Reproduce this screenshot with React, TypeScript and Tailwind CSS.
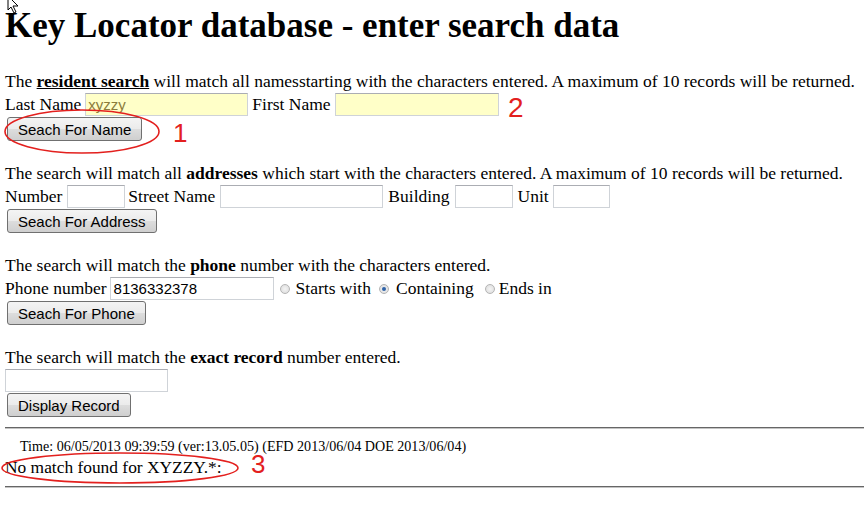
import React from 'react';

const Field = ({ w, value, yellow, className = '' }: { w: string; value?: string; yellow?: boolean; className?: string }) => (
  <div
    className={`h-[23px] border border-[#cfd3d8] border-t-[#abadb3] flex items-center pl-[2px] font-['Liberation_Sans',Arial,sans-serif] text-[15px] leading-none ${
      yellow ? 'bg-[#ffffc8] text-[#8c7d3b]' : 'bg-white text-black'
    } ${w} ${className}`}
  >
    {value}
  </div>
);

const Btn = ({ children }: { children: React.ReactNode }) => (
  <div className="flex">
    <button className="ml-[2px] h-[24px] px-[10px] rounded-[3px] border border-[#707070] bg-[linear-gradient(to_bottom,#f4f4f4_0%,#ebebeb_50%,#dddddd_50%,#cfcfcf_100%)] font-['Liberation_Sans',Arial,sans-serif] text-[15px] leading-none text-black whitespace-nowrap">
      {children}
    </button>
  </div>
);

const Radio = ({ checked }: { checked?: boolean }) => (
  <span className="w-[10px] h-[10px] rounded-full border border-[#b4b4b4] bg-[radial-gradient(circle,#f4f4f4_0%,#dadada_100%)] flex items-center justify-center">
    {checked && <span className="w-[4px] h-[4px] rounded-full bg-[#2f63a8]" />}
  </span>
);

export default function App() {
  return (
    <div className="relative min-h-screen overflow-hidden bg-white text-black font-['Liberation_Serif','Times_New_Roman',serif] text-[17.5px]">
      <div className="pl-[5px] pt-[7px]">
        <h1 className="text-[35px] leading-[37px] font-bold whitespace-nowrap">Key Locator database - enter search data</h1>

        <section className="mt-[29px]">
          <p className="h-[19px] leading-[17px] whitespace-nowrap">
            The <b className="underline">resident search</b> will match all namesstarting with the characters entered. A maximum of 10 records will be returned.
          </p>
          <div className="flex items-center h-[25px] whitespace-nowrap">
            <span>Last Name</span>
            <Field w="w-[163px]" yellow value="xyzzy" className="ml-[4px]" />
            <span className="ml-[4px]">First Name</span>
            <Field w="w-[164px]" yellow className="ml-[4px]" />
          </div>
          <Btn>Seach For Name</Btn>
        </section>

        <section className="mt-[24px]">
          <p className="h-[19px] leading-[17px] whitespace-nowrap">
            The search will match all <b>addresses</b> which start with the characters entered. A maximum of 10 records will be returned.
          </p>
          <div className="flex items-center h-[25px] whitespace-nowrap">
            <span>Number</span>
            <Field w="w-[58px]" className="ml-[5px]" />
            <span className="ml-[3px]">Street Name</span>
            <Field w="w-[163px]" className="ml-[5px]" />
            <span className="ml-[5px]">Building</span>
            <Field w="w-[58px]" className="ml-[5px]" />
            <span className="ml-[5px]">Unit</span>
            <Field w="w-[57px]" className="ml-[4px]" />
          </div>
          <Btn>Seach For Address</Btn>
        </section>

        <section className="mt-[24px]">
          <p className="h-[19px] leading-[17px] whitespace-nowrap">
            The search will match the <b>phone</b> number with the characters entered.
          </p>
          <div className="flex items-center h-[25px] whitespace-nowrap">
            <span>Phone number</span>
            <Field w="w-[164px]" value="8136332378" className="ml-[3px] pl-[3px]" />
            <span className="ml-[6px]"><Radio /></span>
            <span className="ml-[6px]">Starts with</span>
            <span className="ml-[8px]"><Radio checked /></span>
            <span className="ml-[7px]">Containing</span>
            <span className="ml-[11px]"><Radio /></span>
            <span className="ml-[4px]">Ends in</span>
          </div>
          <Btn>Seach For Phone</Btn>
        </section>

        <section className="mt-[24px]">
          <p className="h-[19px] leading-[17px] whitespace-nowrap">
            The search will match the <b>exact record</b> number entered.
          </p>
          <div className="flex items-center h-[25px]">
            <Field w="w-[163px]" />
          </div>
          <Btn>Display Record</Btn>
        </section>

        <hr className="mt-[10px] border-0 border-t border-b border-t-[#666666] border-b-[#c4c4c4]" />
        <div className="mt-[9px] pl-[15px] text-[14.1px] leading-[16px] whitespace-nowrap">
          Time: 06/05/2013 09:39:59 (ver:13.05.05) (EFD 2013/06/04 DOE 2013/06/04)
        </div>
        <div className="mt-[3px] text-[17.4px] leading-[20px] whitespace-nowrap">No match found for XYZZY.*:</div>
        <hr className="mt-[9px] border-0 border-t border-b border-t-[#666666] border-b-[#c4c4c4]" />
      </div>

      {/* red annotations drawn over the page */}
      <svg className="absolute left-0 top-0 pointer-events-none" width="864" height="520">
        <ellipse cx="82" cy="131.5" rx="77" ry="21.5" fill="none" stroke="#e3201e" strokeWidth="1.6" />
        <ellipse cx="120" cy="468" rx="118" ry="15" fill="none" stroke="#e3201e" strokeWidth="1.6" />
        <path d="M8 -4 L8 10 L11 7 L14 13 L16 12 L13 6 L18 6 Z" fill="#ffffff" stroke="#000000" strokeWidth="1" />
      </svg>
      <span className="absolute left-[173px] top-[120px] font-['Liberation_Sans',Arial,sans-serif] text-[26px] leading-none text-[#e3201e]">1</span>
      <span className="absolute left-[508px] top-[94px] font-['Liberation_Sans',Arial,sans-serif] text-[28px] leading-none text-[#e3201e]">2</span>
      <span className="absolute left-[251px] top-[456px] font-['Liberation_Sans',Arial,sans-serif] text-[26px] leading-[17px] text-[#e3201e]">3</span>
    </div>
  );
}
